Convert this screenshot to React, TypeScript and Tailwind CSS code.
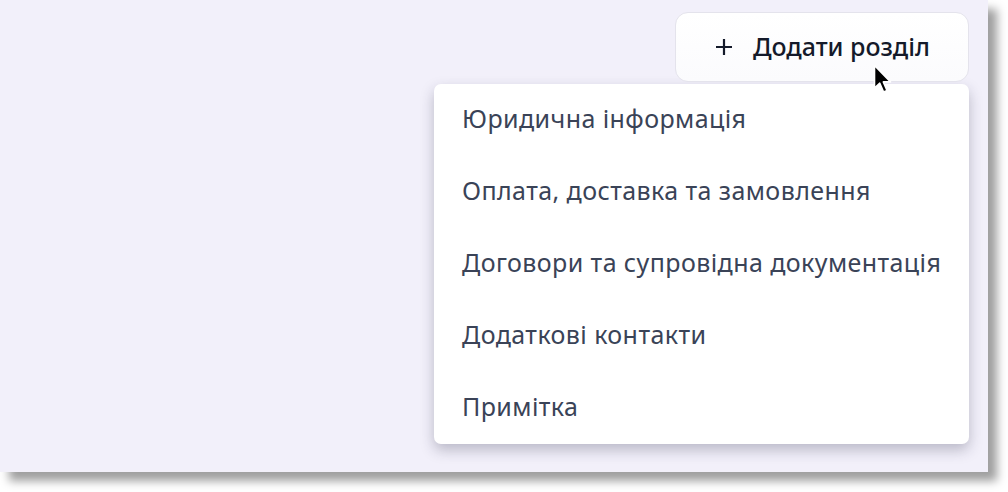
const items = [
  'Юридична інформація',
  'Оплата, доставка та замовлення',
  'Договори та супровідна документація',
  'Додаткові контакти',
  'Примітка',
];

function PlusIcon() {
  return (
    <svg width="16" height="16" viewBox="0 0 16 16" className="shrink-0">
      <path d="M8 0.5 V15.5 M0.5 8 H15.5" stroke="#141a2a" strokeWidth="2.2" strokeLinecap="round" />
    </svg>
  );
}

function Cursor() {
  return (
    <svg width="20" height="32" viewBox="0 0 20 32" className="absolute left-[198px] top-[52px] pointer-events-none">
      <path
        d="M1.5 1.5 L1.5 24 L6.8 19.2 L10.6 28 L14 26.5 L10.3 17.9 L17.5 17.9 Z"
        fill="#000"
        stroke="#fff"
        strokeWidth="1.6"
        strokeLinejoin="round"
      />
    </svg>
  );
}

export default function App() {
  return (
    <div className="w-[1008px] h-[492px] bg-white overflow-hidden" style={{ fontFamily: '"Noto Sans", "Open Sans", sans-serif' }}>
      <div className="w-[988px] h-[472px] bg-[#f2f0fa] shadow-[9px_9px_9px_rgba(0,0,0,0.38)] flex flex-col items-end pt-3 pr-[19px]">
        {/* Add section button */}
        <div className="relative">
          <button className="w-[294px] h-[70px] rounded-[13px] border border-[#e4e3ec] bg-gradient-to-b from-white to-[#fbfbfd] flex items-center justify-center gap-[21px] text-[#141a2a] text-[25px] font-medium pl-[2px]">
            <PlusIcon />
            <span>Додати розділ</span>
          </button>
          <Cursor />
        </div>

        {/* Dropdown */}
        <div className="mt-[2px] w-[535px] bg-white rounded-[7px] shadow-[0_6px_14px_rgba(40,40,70,0.28)] flex flex-col">
          {items.map((item) => (
            <div key={item} className="h-[72px] flex items-center pl-[28px] pb-[2px] text-[25px] tracking-[0.42px] text-[#3a4357]">
              {item}
            </div>
          ))}
        </div>
      </div>
    </div>
  );
}
